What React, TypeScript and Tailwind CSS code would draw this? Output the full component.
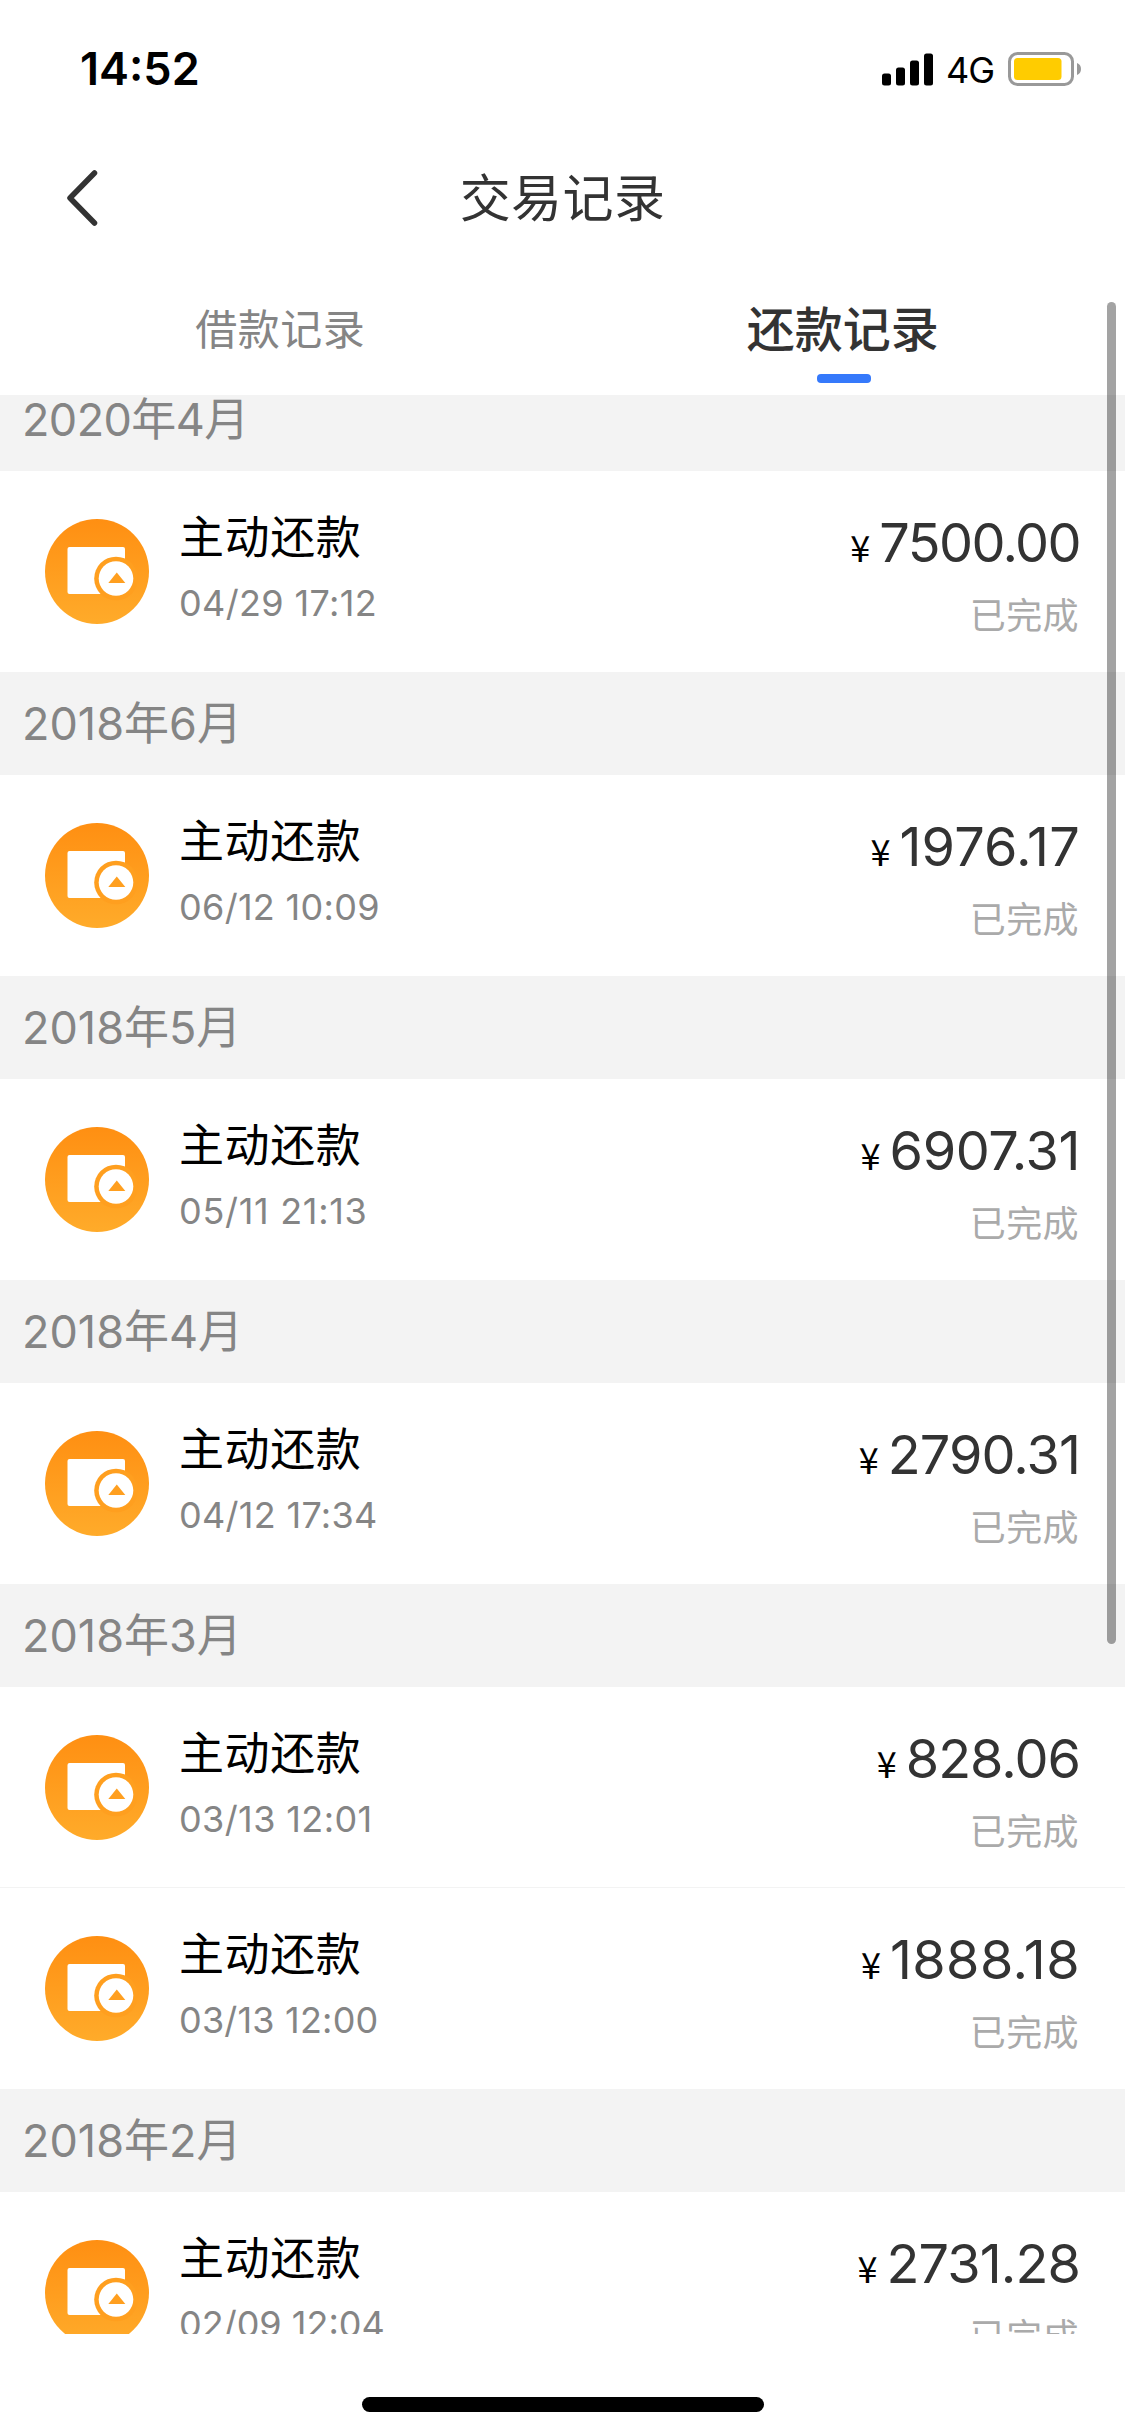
import React from 'react';

interface RepaymentRecord {
  time: string;
  amount: string;
  timeSpacing: string;
  amountSpacing: string;
}

interface MonthGroup {
  month: string;
  spacing?: string;
  records: RepaymentRecord[];
}

const groups: MonthGroup[] = [
  {
    month: '2020年4月',
    spacing: 'tracking-[-0.6px]',
    records: [{ time: '04/29 17:12', amount: '7500.00', timeSpacing: 'tracking-[0.35px]', amountSpacing: 'tracking-[-1.6px]' }],
  },
  {
    month: '2018年6月',
    records: [{ time: '06/12 10:09', amount: '1976.17', timeSpacing: 'tracking-[0.3px]', amountSpacing: 'tracking-[0.2px]' }],
  },
  {
    month: '2018年5月',
    records: [{ time: '05/11 21:13', amount: '6907.31', timeSpacing: 'tracking-[0.7px]', amountSpacing: 'tracking-[-0.4px]' }],
  },
  {
    month: '2018年4月',
    records: [{ time: '04/12 17:34', amount: '2790.31', timeSpacing: 'tracking-[0.3px]', amountSpacing: 'tracking-[-0.9px]' }],
  },
  {
    month: '2018年3月',
    records: [
      { time: '03/13 12:01', amount: '828.06', timeSpacing: 'tracking-[0.4px]', amountSpacing: 'tracking-[-1px]' },
      { time: '03/13 12:00', amount: '1888.18', timeSpacing: 'tracking-[0.2px]', amountSpacing: 'tracking-[0.4px]' },
    ],
  },
  {
    month: '2018年2月',
    records: [{ time: '02/09 12:04', amount: '2731.28', timeSpacing: 'tracking-normal', amountSpacing: 'tracking-[-0.9px]' }],
  },
];

const StatusBar: React.FC = () => (
  <div className="flex h-[132px] shrink-0 items-start justify-between pt-[46px] pr-[42px] pl-[80px]">
    <span className="text-[45px] leading-[46px] font-semibold text-black">14:52</span>
    <div className="flex h-[46px] items-center">
      <svg width="51" height="33" viewBox="0 0 51 33" fill="#000">
        <rect x="0" y="20.5" width="9" height="12" rx="2.5" />
        <rect x="14" y="14.5" width="9" height="18" rx="2.5" />
        <rect x="28" y="7.5" width="9" height="25" rx="2.5" />
        <rect x="42" y="0.5" width="9" height="32" rx="2.5" />
      </svg>
      <span className="mt-[2px] ml-[13px] w-[50px] text-[36px] leading-[48px] tracking-[-1px] text-black">4G</span>
      <svg className="ml-[12px]" width="75" height="34" viewBox="0 0 75 34">
        <rect x="1.5" y="1.5" width="63" height="31" rx="8" fill="none" stroke="#999" strokeWidth="3" />
        <rect x="6" y="6" width="47.5" height="22" rx="3.5" fill="#ffcc00" />
        <path d="M69 11a6.5 6.5 0 0 1 0 12z" fill="#999" />
      </svg>
    </div>
  </div>
);

const NavBar: React.FC = () => (
  <div className="grid h-[132px] shrink-0 grid-cols-[200px_1fr_200px] items-center">
    <svg className="ml-[66px]" width="33" height="58" viewBox="0 0 33 58" fill="none">
      <path d="M28.5 4 4 29l24.500 25" stroke="#333" strokeWidth="5.5" strokeLinecap="round" strokeLinejoin="round" />
    </svg>
    <h1 className="pt-[2px] text-center text-[51px] leading-[60px] tracking-[0.4px] text-[#333]">交易记录</h1>
  </div>
);

const Tabs: React.FC = () => (
  <div className="grid h-[131px] shrink-0 grid-cols-2">
    <div className="flex flex-col items-center pt-[36px]">
      <span className="pr-[2px] text-[42px] leading-[60px] tracking-[0.5px] text-[#858585]">借款记录</span>
    </div>
    <div className="flex flex-col items-center pt-[34px]">
      <span className="pr-[2px] text-[48px] leading-[64px] font-medium text-[#333]">还款记录</span>
      <div className="mt-[12px] h-[9px] w-[54px] rounded-[4px] bg-[#3579fb]" />
    </div>
  </div>
);

const WalletIcon: React.FC = () => (
  <svg className="mt-[3px] shrink-0" width="104" height="105" viewBox="0 0 104 105">
    <defs>
      <linearGradient id="wallet" x1="0" y1="0" x2="0" y2="1">
        <stop offset="0" stopColor="#ff8f12" />
        <stop offset="1" stopColor="#ffab2a" />
      </linearGradient>
    </defs>
    <ellipse cx="52" cy="52.5" rx="52" ry="52.5" fill="url(#wallet)" />
    <rect x="22.500" y="28" width="57.500" height="47" rx="2" fill="#fff" />
    <circle cx="71" cy="59.500" r="21.800" fill="#ff9f1f" />
    <circle cx="71" cy="59.500" r="17.300" fill="#fff" />
    <path d="M71.800 53.500 80.300 64H63.300z" fill="#ff9f1f" />
  </svg>
);

const RecordRow: React.FC<{ record: RepaymentRecord }> = ({ record }) => (
  <div className="flex h-[201px] items-start border-[#f3f3f3] bg-white px-[45px] pt-[45px] not-last:border-b">
    <WalletIcon />
    <div className="ml-[30px] flex flex-1 flex-col gap-[25px]">
      <span className="-mt-px text-[45px] leading-[45px] tracking-[0.6px] text-black">主动还款</span>
      <span className={`text-[36px] leading-[36px] text-[#858585] ${record.timeSpacing}`}>{record.time}</span>
    </div>
    <div className="flex flex-col items-end gap-[25px]">
      <div className="flex items-baseline leading-[54px]">
        <span className="mr-[9px] font-['Noto_Sans_CJK_SC',sans-serif] text-[36px] text-black">¥</span>
        <span className={`text-[54px] text-[#333] ${record.amountSpacing}`}>{record.amount}</span>
      </div>
      <span className="pr-px text-[36px] leading-[36px] tracking-[0.4px] text-[#aaa]">已完成</span>
    </div>
  </div>
);

const App: React.FC = () => {
  return (
    <div className="relative flex h-[2436px] w-[1125px] flex-col overflow-hidden bg-white font-['Inter','Noto_Sans_CJK_SC',sans-serif]">
      <StatusBar />
      <NavBar />
      <Tabs />
      <div className="h-[1939px] shrink-0 overflow-hidden">
        {/* list is scrolled a little, so the first month header is cut */}
        <div className="-mt-[27px]">
          {groups.map((group) => (
            <section key={group.month}>
              <h2
                className={`flex h-[103px] items-center bg-[#f3f3f3] pl-[22px] text-[45px] text-[#858585] ${group.spacing ?? ''}`}
              >
                {group.month}
              </h2>
              {group.records.map((record) => (
                <RecordRow key={record.time} record={record} />
              ))}
            </section>
          ))}
        </div>
      </div>
      <div className="mx-auto mt-[63px] h-[15px] w-[402px] shrink-0 rounded-full bg-black" />
      <div className="absolute top-[302px] right-[9px] h-[1342px] w-[9px] rounded-full bg-black/36" />
    </div>
  );
};

export default App;
